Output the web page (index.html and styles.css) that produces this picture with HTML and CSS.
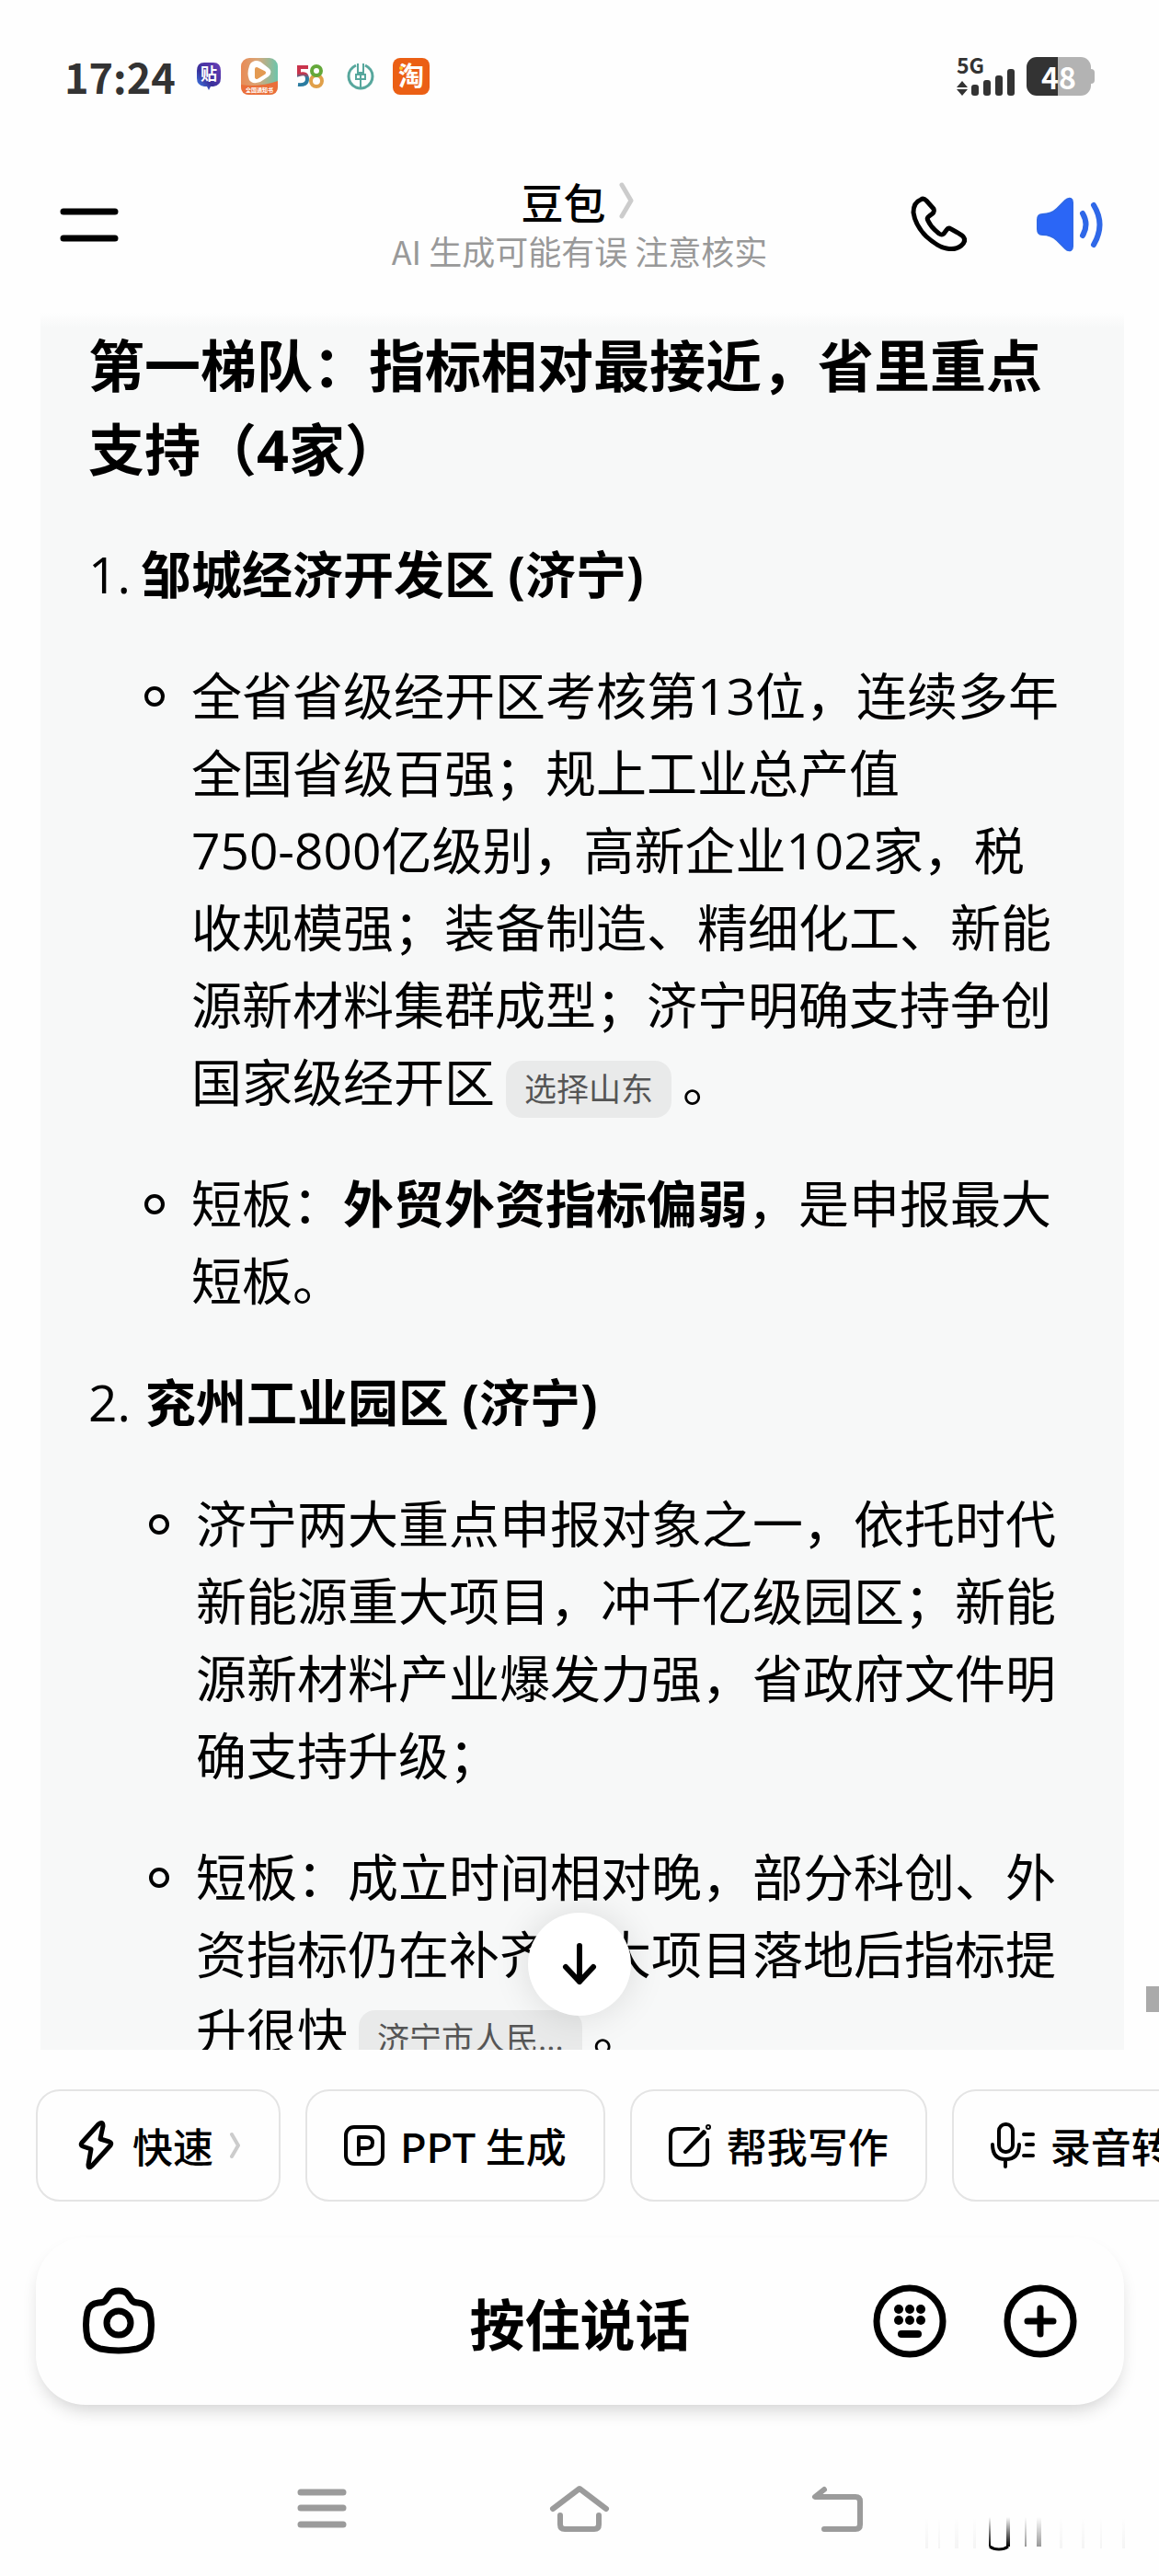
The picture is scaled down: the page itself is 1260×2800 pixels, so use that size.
FILE: index.html
```html
<!DOCTYPE html>
<html lang="zh-CN">
<head>
  <meta charset="UTF-8" />
  <meta name="viewport" content="width=device-width, initial-scale=1.0"/>
  <title>豆包</title>
  <link rel="stylesheet" href="styles.css">
</head>
<body>
  <div class="status-bar">
    <span class="time">17:24</span>
    <div class="notifications">
      <svg width="30" height="36" viewBox="0 0 30 36">
        <defs>
          <linearGradient id="tieba" x1="0" y1="1" x2="1" y2="0">
            <stop offset="0" stop-color="#3b8cf5"/><stop offset=".4" stop-color="#3a2f9a"/><stop offset="1" stop-color="#6a3fb8"/>
          </linearGradient>
        </defs>
        <path d="M10 3h10q8 0 8 9v8q0 8-8 9h-3l-2 4-2-4h-3q-8-1-8-9v-8q0-9 8-9z" fill="url(#tieba)"/>
        <text x="15" y="22" class="icon-text" font-size="18">贴</text>
      </svg>
      <svg width="42" height="42" viewBox="0 0 42 42">
        <defs>
          <linearGradient id="video" x1="0" y1="0" x2="1" y2="0">
            <stop offset="0" stop-color="#e98a55"/><stop offset=".45" stop-color="#d9a678"/><stop offset="1" stop-color="#6cc5ac"/>
          </linearGradient>
        </defs>
        <rect x="1" y="1" width="40" height="40" rx="9" fill="url(#video)"/>
        <path d="M1 30q20 3 40-4v6q0 9-9 9H10q-9 0-9-9z" fill="#ea6f3a"/>
        <path d="M14 5q3-2 8 0l9 7q5 4 0 9l-9 6q-9 3-12-2-3-7 0-15 1-4 4-5z" fill="#fff"/>
        <path d="M18 13l8 4-8 5z" fill="#e39a52" stroke="#e39a52" stroke-width="4" stroke-linejoin="round"/>
        <text x="21" y="38" class="icon-text" font-size="6">全国通知书</text>
      </svg>
      <svg width="32" height="30" viewBox="0 0 32 30">
        <defs>
          <linearGradient id="five" x1="0" y1="0" x2="0" y2="1">
            <stop offset=".35" stop-color="#c9344c"/><stop offset=".6" stop-color="#2a7ba0"/>
          </linearGradient>
        </defs>
        <path d="M14 5H4v8q9-3 9 5 0 7-10 6" fill="none" stroke="url(#five)" stroke-width="4"/>
        <circle cx="23" cy="20" r="6" fill="none" stroke="#e0a04a" stroke-width="4"/>
        <circle cx="23" cy="9" r="5" fill="none" stroke="#64a83a" stroke-width="4"/>
      </svg>
      <svg width="32" height="32" viewBox="0 0 32 32" fill="none" stroke="#57a79d">
        <path d="M11 4Q3 8 3 16t8 12q5 2 10 0 8-4 8-12T21 4" stroke-width="3"/>
        <path d="M13 2v10h6V2M16 13v17M11 14h10v5H11z" stroke-width="2"/>
      </svg>
      <svg width="42" height="42" viewBox="0 0 42 42">
        <rect x="1" y="1" width="40" height="40" rx="8" fill="#eb5f14"/>
        <text x="21" y="31" class="icon-text" font-size="28">淘</text>
        <circle cx="10" cy="12" r="2" fill="#ffc928"/>
      </svg>
    </div>
    <svg class="signal" width="66" height="44" viewBox="0 0 66 44" fill="#333">
      <text x="1" y="19" class="signal-text">5G</text>
      <path d="M7 27l6 7H1zM7 43l6-7H1z"/>
      <rect x="17" y="31" width="8" height="12" rx="3"/>
      <rect x="30" y="26" width="8" height="17" rx="3"/>
      <rect x="43" y="21" width="8" height="22" rx="3"/>
      <rect x="56" y="14" width="8" height="29" rx="3"/>
    </svg>
    <div class="battery">48</div>
  </div>

  <header class="header">
    <button class="icon-button" aria-label="菜单">
      <svg width="72" height="40" viewBox="0 0 72 40" stroke="#000" stroke-width="7" stroke-linecap="round">
        <path d="M9 6h56M9 35h56"/>
      </svg>
    </button>
    <div class="title">
      <h1>豆包
        <svg width="20" height="42" viewBox="0 0 20 42" fill="none" stroke="#ccc" stroke-width="5" stroke-linecap="round" stroke-linejoin="round">
          <path d="M3 4l10 17L3 38"/>
        </svg>
      </h1>
      <p>AI 生成可能有误 注意核实</p>
    </div>
    <div class="header-actions">
      <button class="icon-button" aria-label="通话">
        <svg width="62" height="62" viewBox="0 0 62 62" fill="none" stroke="#000" stroke-width="5" stroke-linejoin="round">
          <path d="M12 4Q4 7 4 18q2 14 14 26 12 11 22 13 10 2 16-3 6-5 2-10-2-2-13-8-3-2-5 1l-3 4q-2 2-5 0-9-7-12-14-2-3 1-5l4-3q2-2 1-5L18 5q-3-3-6-1z"/>
        </svg>
      </button>
      <button class="icon-button" aria-label="朗读">
        <svg width="74" height="60" viewBox="0 0 74 60" fill="none" stroke="#2f68e8" stroke-width="6" stroke-linecap="round" stroke-linejoin="round">
          <path d="M7 19q10 0 16-6l9-9q3-3 6-2 2 1 2 4v48q0 3-2 4-3 1-6-2l-9-9q-6-6-16-6-5 0-5-6V25q0-6 5-6z" fill="#2b66f6" stroke-width="2"/>
          <path d="M51 18q7 12 0 24M63 9q13 21 0 43"/>
        </svg>
      </button>
    </div>
  </header>

  <main class="chat">
    <article class="message">
      <h2>第一梯队：指标相对最接近，省里重点支持（4家）</h2>
      <ol class="regions">
        <li>
          <span class="number">1.</span>
          <h3>邹城经济开发区 (济宁)</h3>
          <ul>
            <li>全省省级经开区考核第13位，连续多年全国省级百强；规上工业总产值<span class="range">750-800</span>亿级别，高新企业102家，税收规模强；装备制造、精细化工、新能源新材料集群成型；济宁明确支持争创国家级经开区<a class="source" href="#">选择山东</a>。</li>
            <li>短板：<strong>外贸外资指标偏弱</strong>，是申报最大短板。</li>
          </ul>
        </li>
        <li>
          <span class="number">2.</span>
          <h3>兖州工业园区 (济宁)</h3>
          <ul>
            <li>济宁两大重点申报对象之一，依托时代新能源重大项目，冲千亿级园区；新能源新材料产业爆发力强，省政府文件明确支持升级；</li>
            <li>短板：成立时间相对晚，部分科创、外资指标仍在补齐，大项目落地后指标提升很快<a class="source" href="#">济宁市人民...</a>。</li>
          </ul>
        </li>
      </ol>
    </article>
    <button class="scroll-down" aria-label="回到底部">
      <svg width="44" height="50" viewBox="0 0 44 50" fill="none" stroke="#000" stroke-width="6" stroke-linecap="round" stroke-linejoin="round">
        <path d="M22 5v39M7 28l15 16 15-16"/>
      </svg>
    </button>
    <span class="scroll-thumb"></span>
  </main>

  <div class="shortcuts">
    <button>
      <svg width="46" height="60" viewBox="-5 -4 46 60" fill="none" stroke="#000" stroke-width="5" stroke-linejoin="round">
        <path d="M21 3L3 23q-2 3 1 4l9 3-3 17q0 5 4 1l20-22q2-3-1-4l-10-3 3-14q0-6-5-2z"/>
      </svg>
      快速
      <svg class="more" width="14" height="32" viewBox="0 0 14 32" fill="none" stroke="#ccc" stroke-width="4" stroke-linecap="round" stroke-linejoin="round">
        <path d="M3 4l7 12-7 12"/>
      </svg>
    </button>
    <button>
      <svg width="44" height="46" viewBox="0 0 44 46" fill="none" stroke="#000" stroke-width="4" stroke-linecap="round" stroke-linejoin="round">
        <rect x="2" y="3" width="40" height="40" rx="9"/>
        <path d="M16 33V14h8q7 0 7 6t-7 6h-8"/>
      </svg>
      PPT 生成
    </button>
    <button>
      <svg width="46" height="48" viewBox="0 0 46 48" fill="none" stroke="#000" stroke-width="4" stroke-linecap="round" stroke-linejoin="round">
        <path d="M32 6H10q-8 0-8 8v24q0 7 8 7h24q8 0 8-7V18"/>
        <path d="M18 31L38 9l1 1z"/><circle cx="43" cy="4" r="1"/>
      </svg>
      帮我写作
    </button>
    <button>
      <svg width="48" height="50" viewBox="0 0 48 50" fill="none" stroke="#000" stroke-width="4" stroke-linecap="round">
        <rect x="9" y="2" width="15" height="30" rx="7"/>
        <path d="M2 24q0 16 14 16 15 0 15-16M16 40v8M36 13h10M39 24h7M36 36h10"/>
      </svg>
      录音转文字
    </button>
  </div>

  <div class="composer">
    <button class="icon-button" aria-label="拍照">
      <svg width="78" height="74" viewBox="0 0 78 74" fill="none" stroke="#000" stroke-width="7">
        <path d="M29 8q3-4 10-4t10 4l4 6q2 3 7 3 11 1 13 10 3 14 0 28-3 9-14 12-20 4-40 0Q8 64 5 55q-3-14 0-28 2-9 12-10 6 0 8-3z"/>
        <circle cx="39" cy="39" r="13"/>
      </svg>
    </button>
    <button class="talk">按住说话</button>
    <div class="composer-actions">
      <button class="icon-button" aria-label="键盘">
        <svg width="80" height="80" viewBox="0 0 80 80">
          <circle cx="40" cy="40" r="36" fill="none" stroke="#000" stroke-width="7"/>
          <circle cx="28" cy="27" r="5"/><circle cx="40" cy="27" r="5"/><circle cx="52" cy="27" r="5"/>
          <circle cx="28" cy="39" r="5"/><circle cx="40" cy="39" r="5"/><circle cx="52" cy="39" r="5"/>
          <rect x="27" y="50" width="26" height="8" rx="4"/>
        </svg>
      </button>
      <button class="icon-button" aria-label="更多">
        <svg width="80" height="80" viewBox="0 0 80 80" fill="none" stroke="#000" stroke-width="7" stroke-linecap="round">
          <circle cx="40" cy="40" r="36"/>
          <path d="M26 40h28M40 26v28"/>
        </svg>
      </button>
    </div>
  </div>

  <nav class="system-nav">
    <button class="icon-button" aria-label="最近任务">
      <svg width="66" height="52" viewBox="0 0 66 52" stroke="#9b9b9b" stroke-width="7" stroke-linecap="round">
        <path d="M10 8h46M10 25h46M10 43h46"/>
      </svg>
    </button>
    <button class="icon-button" aria-label="主页">
      <svg width="66" height="52" viewBox="0 0 66 52" fill="none" stroke="#9b9b9b" stroke-width="6" stroke-linecap="round" stroke-linejoin="round">
        <path d="M4 26L33 4l29 22M12 33v10q0 5 5 5h32q5 0 5-5V33"/>
      </svg>
    </button>
    <button class="icon-button" aria-label="返回">
      <svg width="66" height="52" viewBox="0 0 66 52" fill="none" stroke="#9b9b9b" stroke-width="6" stroke-linecap="round" stroke-linejoin="round">
        <path d="M19 5l-10 8h44q5 0 5 5v25q0 5-5 5H19"/>
      </svg>
    </button>
    <svg class="watermark" width="230" height="44" viewBox="0 0 230 44">
      <defs>
        <linearGradient id="fade" x1="0" y1="0" x2="0" y2="1">
          <stop offset="0" stop-color="#000" stop-opacity="0"/><stop offset="1" stop-color="#000"/>
        </linearGradient>
      </defs>
      <path d="M75 2h2v32h-2zM94 2h4v32h-4z" fill="url(#fade)"/>
      <path d="M76 34q4 3 10 3t10-3" fill="none" stroke="#000" stroke-width="3"/>
      <path d="M114 2h2v32h-2zM127 2h5v32h-5z" fill="url(#fade)" opacity=".4"/>
      <path d="M6 2h3v34H6zM20 2h2v34h-2zM38 2h4v34h-4zM58 2h3v34h-3zM152 2h3v34h-3zM176 2h3v34h-3zM196 2h2v34h-2zM220 2h3v34h-3z" fill="url(#fade)" opacity=".04"/>
    </svg>
  </nav>
</body>
</html>
```

FILE: styles.css
```css
*, *::before, *::after {
  box-sizing: border-box;
}
body {
  display: flex;
  flex-direction: column;
  height: 100vh;
  margin: 0;
  overflow: hidden;
  background: #fefefe;
  color: #000;
  font-family: "Noto Sans CJK SC", sans-serif;
}
h1, h2, h3, p, ol, ul {
  margin: 0;
  padding: 0;
  list-style: none;
}
button {
  padding: 0;
  border: none;
  background: none;
  color: inherit;
  font-family: inherit;
  cursor: pointer;
}
svg {
  display: block;
  flex: none;
}

/* status bar */
.status-bar {
  display: flex;
  align-items: center;
  flex: none;
  height: 166px;
  padding: 0 70px;
}
.time {
  color: #333;
  font-size: 45px;
  font-weight: bold;
  line-height: 60px;
}
.notifications {
  display: grid;
  grid-template-columns: repeat(5, 55px);
  align-items: center;
  justify-items: center;
  margin-left: 9px;
}
.icon-text {
  fill: #fff;
  font-weight: bold;
  text-anchor: middle;
}
.signal {
  margin-left: auto;
}
.signal-text {
  font-size: 23px;
  font-weight: bold;
}
.battery {
  position: relative;
  width: 70px;
  margin: 0 4px 0 11px;
  border-radius: 11px;
  background: linear-gradient(to right, #333 48%, #b3b3b3 48%);
  color: #fff;
  font-size: 32px;
  font-weight: bold;
  line-height: 42px;
  text-align: center;
}
.battery::after {
  content: "";
  position: absolute;
  top: 13px;
  right: -4px;
  width: 4px;
  height: 16px;
  border-radius: 0 4px 4px 0;
  background: #b3b3b3;
}

/* header */
.header {
  display: grid;
  grid-template-columns: 1fr auto 1fr;
  align-items: center;
  flex: none;
  height: 174px;
  padding: 0 60px 18px;
}
.icon-button {
  justify-self: start;
}
.title {
  text-align: center;
}
.title h1 {
  display: flex;
  align-items: center;
  justify-content: center;
  gap: 15px;
  font-size: 46px;
  font-weight: 500;
  line-height: 56px;
}
.title p {
  color: #999;
  font-size: 36px;
  line-height: 52px;
}
.header-actions {
  display: flex;
  justify-content: flex-end;
  align-items: center;
  gap: 75px;
}

/* conversation */
.chat {
  position: relative;
  flex: 1;
  min-height: 0;
  padding: 0 38px 0 44px;
  overflow: hidden;
}
.message {
  padding: 12px 68px 48px 52px;
  background: linear-gradient(#fefefe, #f7f8f8 16px);
  font-family: "Open Sans", "Noto Sans CJK SC", sans-serif;
  font-size: 55px;
  line-height: 84px;
}
.message h2 {
  font-size: 61px;
  line-height: 91px;
}
.message h3 {
  font-size: 55px;
}
.regions > li {
  display: grid;
  grid-template-columns: 57px 1fr;
  margin-top: 48px;
}
.regions > li:nth-child(2) {
  grid-template-columns: 62px 1fr;
}
.regions ul {
  grid-column: 2;
}
.regions ul li {
  position: relative;
  margin-top: 48px;
  padding-left: 55px;
}
.regions ul li::before {
  content: "";
  position: absolute;
  top: 32px;
  left: 4px;
  width: 22px;
  height: 22px;
  border: 4px solid #000;
  border-radius: 50%;
}
.range {
  white-space: nowrap;
}
.source {
  display: inline-block;
  margin: 0 12px;
  padding: 0 20px;
  border-radius: 18px;
  background: #e9eaea;
  color: #555;
  font-size: 35px;
  line-height: 62px;
  text-decoration: none;
}
.scroll-down {
  position: absolute;
  left: 50%;
  bottom: 37px;
  display: flex;
  align-items: center;
  justify-content: center;
  width: 112px;
  height: 112px;
  margin-left: -56px;
  border-radius: 50%;
  background: #fff;
  box-shadow: 0 0 40px rgba(0,0,0,0.12);
}
.scroll-thumb {
  position: absolute;
  right: 0;
  bottom: 41px;
  width: 14px;
  height: 28px;
  background: #aaa;
}

/* bottom bar */
.shortcuts {
  display: flex;
  flex: none;
  gap: 27px;
  margin-top: 43px;
  padding-left: 39px;
  overflow: hidden;
}
.shortcuts button {
  display: flex;
  align-items: center;
  flex: none;
  gap: 17px;
  height: 122px;
  padding: 0 40px;
  border: 2px solid #e4e4e4;
  border-radius: 26px;
  font-size: 44px;
  font-weight: 500;
  white-space: nowrap;
}
.composer {
  display: grid;
  grid-template-columns: 1fr auto 1fr;
  align-items: center;
  flex: none;
  height: 182px;
  margin: 39px 38px 0 39px;
  padding: 0 51px;
  border-radius: 54px;
  background: #fefefe;
  box-shadow: 0 10px 20px -6px rgba(0,0,0,0.2);
}
.talk {
  font-size: 60px;
  font-weight: bold;
}
.composer-actions {
  display: flex;
  justify-content: flex-end;
  gap: 62px;
}
.system-nav {
  position: relative;
  display: flex;
  align-items: center;
  justify-content: center;
  flex: none;
  gap: 214px;
  height: 186px;
  padding-top: 40px;
}
.watermark {
  position: absolute;
  right: 30px;
  bottom: 22px;
}
```
